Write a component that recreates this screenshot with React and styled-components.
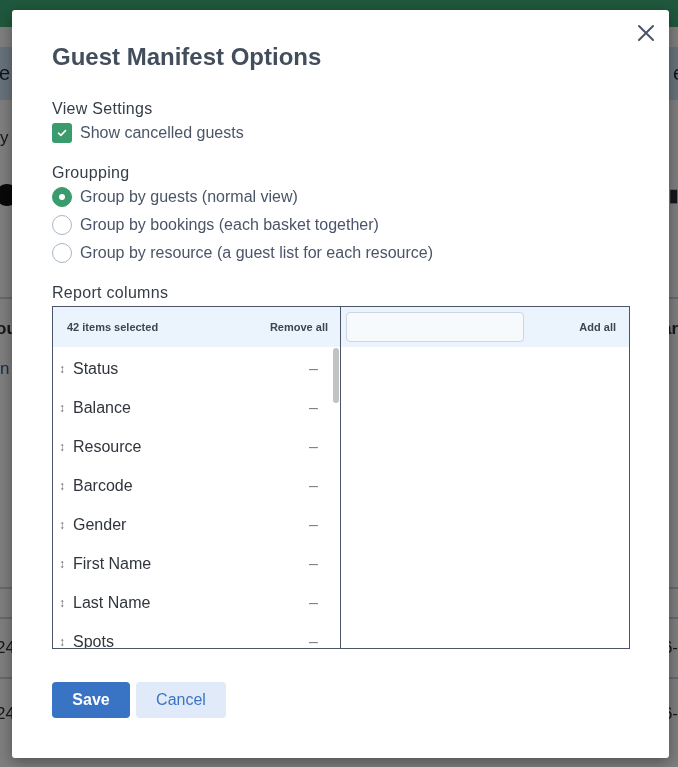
import React from 'react';
import styled, { createGlobalStyle } from 'styled-components';

const GlobalStyle = createGlobalStyle`
  html, body { margin: 0; padding: 0; height: 100%; }
  body {
    font-family: "Liberation Sans", Arial, sans-serif;
    background: #fff;
    overflow: hidden;
  }
  * { box-sizing: border-box; }
`;

const FONT = '"Liberation Sans", Arial, sans-serif';

const selectedColumns = [
  'Status', 'Balance', 'Resource', 'Barcode', 'Gender', 'First Name', 'Last Name', 'Spots',
  'Email', 'Phone', 'Address', 'City', 'State', 'Zip Code', 'Country', 'Date of Birth',
  'Age', 'Weight', 'Height', 'Shoe Size', 'Notes', 'Booking ID', 'Booking Date', 'Start Time',
  'End Time', 'Product', 'Option', 'Price', 'Paid', 'Due', 'Waiver', 'Check-in',
  'Pickup', 'Hotel', 'Room', 'Language', 'Agent', 'Source', 'Coupon', 'Tags',
  'Emergency Contact', 'Custom Field',
];

/* ---------- background page ---------- */

const Page = styled.div`
  height: 767px;
  filter: blur(0.7px);
`;

const TopBar = styled.div`
  height: 27px;
  background: #3fb27a;
  display: flex;
  justify-content: flex-end;
  align-items: flex-end;
  color: #e9f4ee;
  font-size: 19px;
  line-height: 20px;
`;

const WhiteStrip = styled.div`
  height: ${p => p.h}px;
  border-bottom: ${p => (p.line ? '2px solid #c9d6e3' : 'none')};
  display: flex;
  justify-content: space-between;
  align-items: center;
  font-size: 17px;
  color: #2a2f36;
`;

const Band = styled.div`
  height: 53px;
  background: #d2e6f7;
  display: flex;
  justify-content: space-between;
  align-items: center;
  font-size: 20px;
  font-weight: 700;
  color: #1c2a38;
`;

const Edge = styled.span`
  margin: 0 ${p => p.m || 0}px;
  color: ${p => p.c || 'inherit'};
  font-weight: ${p => p.w || 400};
`;

const Dot = styled.span`
  width: 22px;
  height: 22px;
  border-radius: 50%;
  background: #111;
  margin-left: ${p => p.m}px;
`;

const Overlay = styled.div`
  position: fixed;
  inset: 0;
  background: rgba(0, 0, 0, 0.51);
  display: flex;
  align-items: flex-start;
  padding: 10px 0 0 12px;
`;

/* ---------- modal ---------- */

const Modal = styled.div`
  position: relative;
  width: 657px;
  background: #fff;
  border-radius: 3px;
  box-shadow: 0 4px 14px rgba(0, 0, 0, 0.35);
  padding: 31px 40px 40px;
  font-family: ${FONT};
  color: #4a5568;
`;

const CloseButton = styled.button`
  position: absolute;
  top: 13px;
  right: 13px;
  width: 20px;
  height: 20px;
  padding: 0;
  border: 0;
  background: none;
  cursor: pointer;
  color: #4a5568;
`;

const Title = styled.h2`
  margin: 0;
  font-size: 24px;
  line-height: 32px;
  font-weight: 700;
  color: #434e5d;
`;

const Section = styled.div`
  margin-top: ${p => p.top}px;
  display: flex;
  flex-direction: column;
`;

const SectionLabel = styled.div`
  font-size: 16px;
  line-height: 20px;
  letter-spacing: 0.3px;
  color: #353d48;
  margin-bottom: ${p => p.gap || 0}px;
`;

const OptionRow = styled.label`
  display: flex;
  align-items: center;
  gap: 8px;
  height: ${p => p.h || 28}px;
  font-size: 16px;
  color: #4a5568;
  cursor: pointer;
`;

const CheckBox = styled.span`
  width: 20px;
  height: 20px;
  border-radius: 3px;
  background: #3a9b6c;
  display: flex;
  align-items: center;
  justify-content: center;
  flex-shrink: 0;
`;

const Radio = styled.span`
  width: 20px;
  height: 20px;
  border-radius: 50%;
  flex-shrink: 0;
  display: flex;
  align-items: center;
  justify-content: center;
  background: ${p => (p.checked ? '#3a9b6c' : '#fff')};
  border: 1px solid ${p => (p.checked ? '#3a9b6c' : '#a9b6c6')};

  &::after {
    content: '';
    display: ${p => (p.checked ? 'block' : 'none')};
    width: 6px;
    height: 6px;
    border-radius: 50%;
    background: #fff;
  }
`;

const ColumnsBox = styled.div`
  margin-top: 3px;
  width: 578px;
  height: 343px;
  border: 1px solid #4a5568;
  display: grid;
  grid-template-columns: 288px 1fr;
`;

const Column = styled.div`
  display: flex;
  flex-direction: column;
  min-height: 0;
  border-right: ${p => (p.divider ? '1px solid #4a5568' : 'none')};
`;

const ColumnHeader = styled.div`
  height: 40px;
  flex-shrink: 0;
  background: #ebf3fd;
  display: flex;
  align-items: center;
  justify-content: space-between;
  padding: 0 ${p => p.right}px 0 ${p => p.left}px;
  font-size: 11px;
  font-weight: 700;
  color: #3e4650;
`;

const HeaderAction = styled.span`
  cursor: pointer;
`;

const SearchInput = styled.input`
  width: 178px;
  height: 30px;
  border: 1px solid #cdd6e2;
  border-radius: 4px;
  background: #f7fafd;
  outline: none;
  font-family: ${FONT};
  font-size: 14px;
  padding: 0 8px;
`;

const ListArea = styled.div`
  flex: 1;
  min-height: 0;
  display: grid;
  grid-template-columns: 1fr 9px;
`;

const ItemList = styled.div`
  min-height: 0;
  overflow: hidden;
  padding-top: 2px;
`;

const ScrollTrack = styled.div`
  padding: 1px 1px 0 2px;
`;

const ScrollThumb = styled.div`
  height: 55px;
  border-radius: 4px;
  background: #c3c3c3;
`;

const Item = styled.div`
  height: 39px;
  display: flex;
  align-items: center;
  padding: 1px 13px 0 6px;
  font-size: 16px;
  color: #30353c;
`;

const DragHandle = styled.span`
  font-size: 12px;
  font-weight: 700;
  color: #6a6a6a;
  width: 14px;
  text-align: left;
`;

const ItemName = styled.span`
  flex: 1;
`;

const RemoveMark = styled.span`
  color: #808080;
  font-size: 16px;
  cursor: pointer;
`;

const Footer = styled.div`
  margin-top: 33px;
  display: flex;
  gap: 6px;
`;

const Button = styled.button`
  height: 36px;
  width: ${p => p.w}px;
  border: 0;
  border-radius: 4px;
  font-family: ${FONT};
  font-size: 16px;
  font-weight: ${p => (p.primary ? 700 : 400)};
  background: ${p => (p.primary ? '#3873c4' : '#e1eaf8')};
  color: ${p => (p.primary ? '#fff' : '#3b74c3')};
  cursor: pointer;
`;

function CloseIcon() {
  return (
    <svg width="20" height="20" viewBox="0 0 20 20" fill="none" stroke="currentColor" strokeWidth="2" strokeLinecap="round">
      <path d="M3 3L17 17M17 3L3 17" />
    </svg>
  );
}

function CheckIcon() {
  return (
    <svg width="10" height="8" viewBox="0 0 10 8" fill="none" stroke="#fff" strokeWidth="1.6" strokeLinecap="round" strokeLinejoin="round">
      <path d="M1.5 4.2L3.9 6.4L8.5 1.6" />
    </svg>
  );
}

export default function App() {
  const grouping = [
    { id: 'guests', label: 'Group by guests (normal view)', checked: true },
    { id: 'bookings', label: 'Group by bookings (each basket together)' },
    { id: 'resource', label: 'Group by resource (a guest list for each resource)' },
  ];

  return (
    <>
      <GlobalStyle />
      <Page>
        <TopBar><Edge m={12}>▯ Design</Edge></TopBar>
        <WhiteStrip h={20} />
        <Band>
          <Edge m={-12}>ne</Edge>
          <Edge m={-6}>e</Edge>
        </Band>
        <WhiteStrip h={75}><Edge>y</Edge></WhiteStrip>
        <WhiteStrip h={40}><Dot m={-4} /><Edge w={700}>▮</Edge></WhiteStrip>
        <WhiteStrip h={84} line />
        <WhiteStrip h={60}><Edge w={700} m={-4}>ou</Edge><Edge w={700}>ar</Edge></WhiteStrip>
        <WhiteStrip h={20}><Edge c="#2a5d9a">n</Edge></WhiteStrip>
        <WhiteStrip h={210} line />
        <WhiteStrip h={30} line />
        <WhiteStrip h={60} line><Edge m={-4}>24</Edge><Edge>6-</Edge></WhiteStrip>
        <WhiteStrip h={70}><Edge m={-4}>24</Edge><Edge>6-</Edge></WhiteStrip>
      </Page>

      <Overlay>
        <Modal>
          <CloseButton aria-label="Close"><CloseIcon /></CloseButton>
          <Title>Guest Manifest Options</Title>

          <Section top={26}>
            <SectionLabel gap={2}>View Settings</SectionLabel>
            <OptionRow h={24}>
              <CheckBox><CheckIcon /></CheckBox>
              Show cancelled guests
            </OptionRow>
          </Section>

          <Section top={18}>
            <SectionLabel>Groupping</SectionLabel>
            {grouping.map(g => (
              <OptionRow key={g.id}>
                <Radio checked={g.checked} />
                {g.label}
              </OptionRow>
            ))}
          </Section>

          <Section top={16}>
            <SectionLabel>Report columns</SectionLabel>
            <ColumnsBox>
              <Column divider>
                <ColumnHeader left={14} right={12}>
                  <span>{selectedColumns.length} items selected</span>
                  <HeaderAction>Remove all</HeaderAction>
                </ColumnHeader>
                <ListArea>
                  <ItemList>
                    {selectedColumns.map(name => (
                      <Item key={name}>
                        <DragHandle>↕</DragHandle>
                        <ItemName>{name}</ItemName>
                        <RemoveMark>–</RemoveMark>
                      </Item>
                    ))}
                  </ItemList>
                  <ScrollTrack><ScrollThumb /></ScrollTrack>
                </ListArea>
              </Column>
              <Column>
                <ColumnHeader left={5} right={13}>
                  <SearchInput />
                  <HeaderAction>Add all</HeaderAction>
                </ColumnHeader>
              </Column>
            </ColumnsBox>
          </Section>

          <Footer>
            <Button primary w={78}>Save</Button>
            <Button w={90}>Cancel</Button>
          </Footer>
        </Modal>
      </Overlay>
    </>
  );
}
